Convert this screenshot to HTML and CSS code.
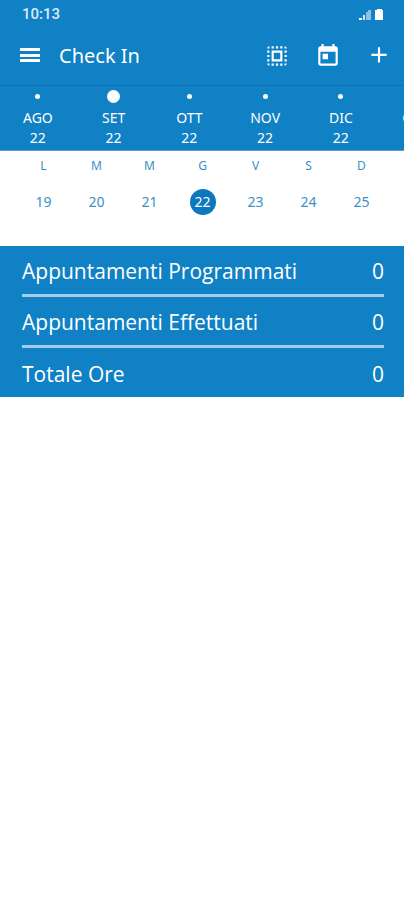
FILE: index.html
```
<!DOCTYPE html>
<html lang="it">

<head>
    <meta charset="UTF-8">
    <meta name="viewport" content="width=device-width, initial-scale=1.0">
    <title>Check In</title>
    <link rel="stylesheet" href="styles.css">
</head>

<body>
    <header>
        <!-- Status bar -->
        <div class="status-bar">
            <span>10:13</span>
            <svg class="status-icons" width="26" height="14" viewBox="0 0 26 14">
                <path d="M1 11h3v2H1z" fill="#fff" />
                <path d="M5 8h2v5H5z" fill="#cfe4f5" />
                <path d="M8 5h2v8H8zM10 3h3v10h-3z" fill="#8fc0e6" />
                <path d="M17 3h2V2h5v1h1v10h-8z" fill="#fff" />
            </svg>
        </div>

        <!-- Toolbar -->
        <div class="toolbar">
            <button type="button" aria-label="Menu">
                <svg width="24" height="24" viewBox="0 0 24 24">
                    <path d="M2 4h20v3H2zM2 10h20v3H2zM2 15h20v3H2z" />
                </svg>
            </button>
            <h1>Check In</h1>
            <button type="button" aria-label="Seleziona tutto">
                <svg width="26" height="26" viewBox="0 0 24 24">
                    <path d="M3 5h2V3c-1.100 0-2 .9-2 2zm0 8h2v-2H3v2zm4 8h2v-2H7v2zM3 9h2V7H3v2zm10-6h-2v2h2V3zm6 0v2h2c0-1.100-.9-2-2-2zM5 21v-2H3c0 1.100.9 2 2 2zm-2-4h2v-2H3v2zM9 3H7v2h2V3zm2 18h2v-2h-2v2zm8-8h2v-2h-2v2zm0 8c1.100 0 2-.9 2-2h-2v2zm0-12h2V7h-2v2zm0 8h2v-2h-2v2zm-4 4h2v-2h-2v2zm0-16h2V3h-2v2zM7 17h10V7H7v10zm2-8h6v6H9V9z" />
                </svg>
            </button>
            <button type="button" aria-label="Oggi">
                <svg width="26" height="26" viewBox="0 0 24 24">
                    <path d="M19 3h-1V1h-2v2H8V1H6v2H5c-1.100 0-2 .9-2 2v14c0 1.100.9 2 2 2h14c1.100 0 2-.9 2-2V5c0-1.100-.9-2-2-2zm0 16H5V8h14v11zM7 10h5v5H7z" />
                </svg>
            </button>
            <button type="button" aria-label="Aggiungi">
                <svg width="26" height="26" viewBox="0 0 24 24">
                    <path d="M19 12h-6v6h-2v-6H5v-2h6V4h2v6h6z" />
                </svg>
            </button>
        </div>
    </header>

    <!-- Months -->
    <nav class="months">
        <button type="button" class="month"><i class="dot"></i>AGO<br>22</button>
        <button type="button" class="month active"><i class="dot"></i>SET<br>22</button>
        <button type="button" class="month"><i class="dot"></i>OTT<br>22</button>
        <button type="button" class="month"><i class="dot"></i>NOV<br>22</button>
        <button type="button" class="month"><i class="dot"></i>DIC<br>22</button>
        <button type="button" class="month"><i class="dot"></i>GEN<br>23</button>
    </nav>

    <!-- Week -->
    <section class="week">
        <table>
            <thead>
                <tr>
                    <th>L</th>
                    <th>M</th>
                    <th>M</th>
                    <th>G</th>
                    <th>V</th>
                    <th>S</th>
                    <th>D</th>
                </tr>
            </thead>
            <tbody>
                <tr>
                    <td><button type="button" class="day">19</button></td>
                    <td><button type="button" class="day">20</button></td>
                    <td><button type="button" class="day">21</button></td>
                    <td><button type="button" class="day active">22</button></td>
                    <td><button type="button" class="day">23</button></td>
                    <td><button type="button" class="day">24</button></td>
                    <td><button type="button" class="day">25</button></td>
                </tr>
            </tbody>
        </table>
    </section>

    <!-- Totals -->
    <dl class="summary">
        <div class="summary-row">
            <dt>Appuntamenti Programmati</dt>
            <dd>0</dd>
        </div>
        <div class="summary-row">
            <dt>Appuntamenti Effettuati</dt>
            <dd>0</dd>
        </div>
        <div class="summary-row">
            <dt>Totale Ore</dt>
            <dd>0</dd>
        </div>
    </dl>
</body>

</html>
```
FILE: styles.css
```
* {
    box-sizing: border-box;
}

body {
    margin: 0;
    background: #fff;
    color: #fff;
    font-family: "Noto Sans", "Open Sans", sans-serif;
}

button {
    padding: 0;
    background: none;
    border: none;
    color: inherit;
    font: inherit;
    cursor: pointer;
}

svg {
    display: block;
    fill: currentColor;
}

header {
    background: #1081c5;
    border-bottom: 1px solid #0c72b2;
}

/* Status bar */

.status-bar {
    display: flex;
    justify-content: space-between;
    align-items: center;
    height: 28px;
    padding: 0 20px 0 22px;
    color: #d9ebf8;
    font-family: Roboto, sans-serif;
    font-size: 15px;
    font-weight: 500;
}

/* Toolbar */

.toolbar {
    display: flex;
    align-items: center;
    gap: 25px;
    height: 57px;
    padding: 0 12px 2px 18px;
}

.toolbar h1 {
    flex: 1;
    margin: 0 0 0 -8px;
    font-size: 20px;
    font-weight: 400;
}

/* Months */

.months {
    display: flex;
    height: 64px;
    overflow: hidden;
    background: #1081c5;
}

.month {
    display: flex;
    flex: 0 0 18.75%;
    flex-direction: column;
    align-items: center;
    justify-content: flex-start;
    padding-top: 8px;
    font-size: 14px;
    line-height: 20px;
}

.dot {
    width: 5px;
    height: 5px;
    margin: 0 0 9px;
    background: #fff;
    border-radius: 50%;
}

.month.active .dot {
    width: 13px;
    height: 13px;
    margin: -4px 0 5px;
}

/* Week */

.week {
    height: 96px;
    padding: 5px 16px 0 17px;
    border-top: 1px solid #5b9bd5;
    color: #3d8fc6;
}

.week table {
    width: 100%;
    border-collapse: collapse;
    table-layout: fixed;
}

.week th {
    height: 20px;
    padding: 0;
    font-size: 12px;
    font-weight: 400;
    line-height: 20px;
}

.week td {
    padding: 13px 0 0;
    text-align: center;
}

.day {
    width: 26px;
    height: 26px;
    border-radius: 50%;
    font-size: 14px;
    line-height: 26px;
}

.day.active {
    background: #0d77bd;
    color: #fff;
}

/* Totals */

.summary {
    margin: 0;
    padding: 0 20px 0 22px;
    background: #1081c5;
}

.summary-row {
    display: flex;
    justify-content: space-between;
    align-items: center;
    height: 51px;
    padding-top: 2px;
    border-bottom: 3px solid #a3cbee;
    font-family: "Open Sans", "Noto Sans", sans-serif;
    font-size: 21px;
}

.summary-row:last-child {
    height: 49px;
    border-bottom: none;
}

.summary-row dd {
    margin: 0;
}
```
